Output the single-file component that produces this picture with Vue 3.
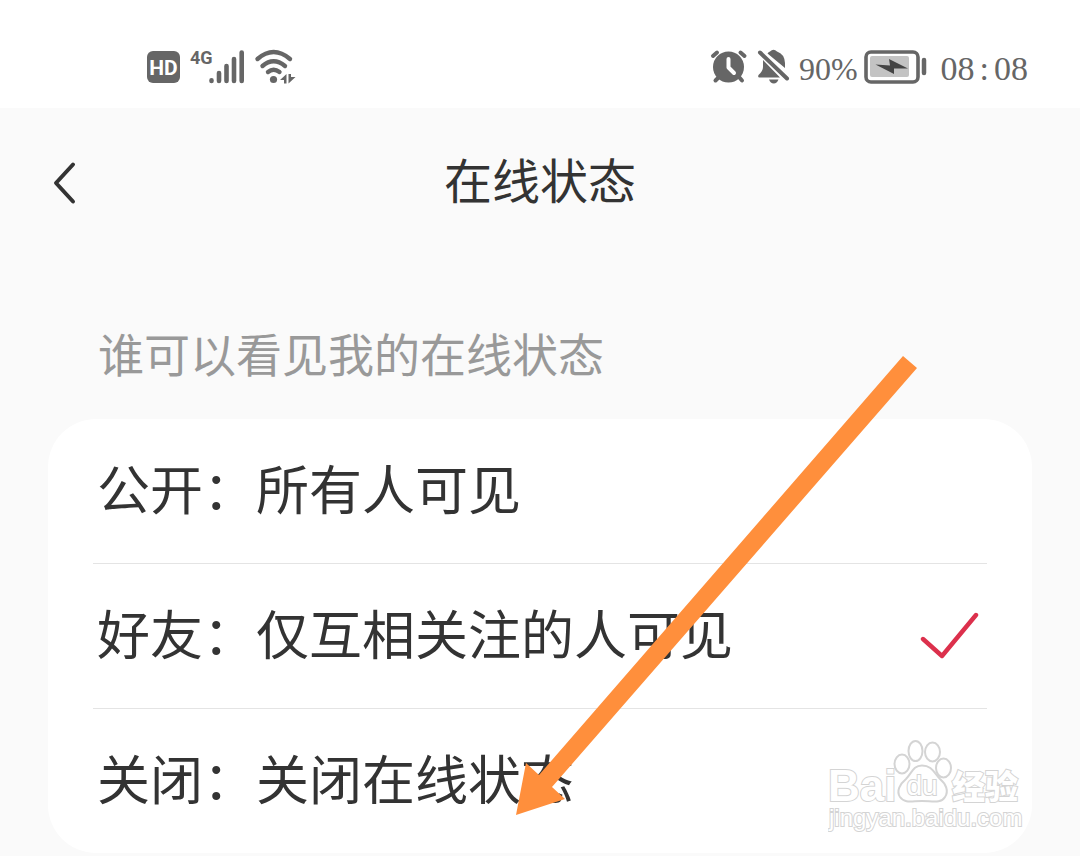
<script setup>
import { ref } from 'vue'

const selected = ref('friends')
const options = [
  { id: 'public', text: '公开：所有人可见' },
  { id: 'friends', text: '好友：仅互相关注的人可见' },
  { id: 'off', text: '关闭：关闭在线状态' },
]
</script>

<template>
  <div class="screen">
    <div class="status">
      <div class="group">
        <svg class="hd" width="33" height="32" viewBox="0 0 33 32" aria-label="HD">
          <rect width="33" height="32" rx="6" fill="#666" />
          <text x="16.5" y="24" text-anchor="middle">HD</text>
        </svg>
        <svg class="signal" width="54" height="34" viewBox="0 0 54 34">
          <text x="-1" y="14">4G</text>
          <g stroke="#666" stroke-width="4.6" stroke-linecap="round">
            <path d="M20.5 30.4v.6M28 23v8M35.500 16v15M43 9v22M50.700 2.500v28.500" />
          </g>
        </svg>
        <svg width="41" height="34" viewBox="0 0 41 34">
          <g fill="none" stroke="#666" stroke-width="4.4" stroke-linecap="round">
            <path d="M2.5 9Q18.5-5 35 9" />
            <path d="M7.5 16Q18.5 6.5 30 16" />
            <path d="M13 22Q18.5 17.500 24.5 22" />
          </g>
          <circle cx="18.5" cy="29.500" r="3.6" fill="#666" />
          <path d="M31.5 24v9.500h-2.500v-3.500h-4zM33.5 24h2.500v3h4.500l-7 6.500z" fill="#666" />
        </svg>
      </div>
      <div class="group">
        <svg class="alarm" width="36" height="34" viewBox="0 0 36 34">
          <g stroke="#666" stroke-width="4" stroke-linecap="round">
            <path d="M2 6L6 2.500M29.5 2.500L33.5 6M8 27L4.500 30.500M28 27L31 30.500" />
          </g>
          <circle cx="17.500" cy="17" r="15.500" fill="#666" />
          <path d="M17.500 9v8.500l5.500 5.500" fill="none" stroke="#fff" stroke-width="4" stroke-linecap="round" stroke-linejoin="round" />
        </svg>
        <svg class="bell" width="32" height="34" viewBox="0 0 32 34">
          <path d="M12 1.500Q15.500-2 19 1.500Q26.500 4 27 13v5L9.500 3.500Q10.500 2 12 1.500zM5 10L22 27.500H1.500Q-.5 27.500 .5 25Q5 21 5 17z" fill="#666" />
          <path d="M2 2.500L29 28.500" stroke="#666" stroke-width="4" stroke-linecap="round" />
          <path d="M11 29.500h9.500Q19 33.500 15.800 33.500Q12.500 33.500 11 29.500z" fill="#666" />
        </svg>
        <span class="percent">90%</span>
        <svg class="battery" width="64" height="34" viewBox="0 0 64 34">
          <rect x="2" y="2" width="52" height="30" rx="5" fill="#fff" stroke="#666" stroke-width="3.6" />
          <rect x="6" y="6" width="39" height="21" rx="2" fill="#c3c3c3" />
          <path d="M11.500 14.500L26 15.500L25 9L44 18.500L30 18.500L30 24z" fill="#444" />
          <path d="M60 10v13" stroke="#666" stroke-width="4.500" stroke-linecap="round" />
        </svg>
        <time class="clock"><span>08</span><span>:</span><span>08</span></time>
      </div>
    </div>

    <header class="bar">
      <button class="back" type="button" aria-label="返回">
        <svg width="24" height="44" viewBox="0 0 24 44">
          <path d="M21 3.500L4 22L21 40.500" fill="none" stroke="#333" stroke-width="4" stroke-linecap="round" stroke-linejoin="round" />
        </svg>
      </button>
      <h1>在线状态</h1>
    </header>

    <main>
      <h2 id="who">谁可以看见我的在线状态</h2>
      <div class="card" role="radiogroup" aria-labelledby="who">
        <label v-for="o in options" :key="o.id" class="row">
          <input v-model="selected" type="radio" name="visibility" :value="o.id" />
          <span>{{ o.text }}</span>
          <svg v-if="selected === o.id" width="60" height="48" viewBox="0 0 60 48">
            <path d="M4 27L23 44L57 3" fill="none" stroke="#dc304c" stroke-width="4.400" stroke-linecap="round" stroke-linejoin="round" />
          </svg>
        </label>

        <svg class="mark" width="200" height="100" viewBox="0 0 200 100">
          <g fill="#fff" stroke="#d4d4d4" stroke-width="2">
            <text class="logo" x="0" y="65">Bai</text>
            <ellipse cx="74" cy="28" rx="7.500" ry="9.500" />
            <ellipse cx="87.500" cy="15" rx="7" ry="10" />
            <ellipse cx="104.500" cy="16" rx="7.500" ry="9.500" />
            <ellipse cx="115.500" cy="32" rx="7.500" ry="9.500" />
            <path d="M94 29.500C104 29.500 106 37 112 43C118 48 121 55 117 61C113 68 104 65 94 65C84 65 77 68 72 61C68 55 72 48 78 43C84 37 85 29.500 94 29.500z" />
            <text class="du" x="94" y="59" text-anchor="middle">du</text>
            <text class="cn" x="124" y="63">经验</text>
            <text class="site" x="1" y="90">jingyan.baidu.com</text>
          </g>
        </svg>
      </div>
    </main>

    <svg class="arrow" width="402" height="460" viewBox="0 0 402 460">
      <path d="M387 1L401 13L36 432L49 444L0 460L10 408L23 420z" fill="#ff8f3c" />
    </svg>
  </div>
</template>

<style>
body {
  background: #fafafa;
}
</style>

<style scoped>
.screen {
  position: relative;
  min-height: 100vh;
  box-sizing: border-box;
  overflow: hidden;
  color: #333;
  background: #fafafa;
  font-family: "Noto Sans CJK SC", sans-serif;
}
.status {
  display: flex;
  justify-content: space-between;
  align-items: center;
  height: 108px;
  box-sizing: border-box;
  padding: 26px 52px 0 147px;
  background: #fff;
  color: #666;
}
.group {
  display: flex;
  align-items: center;
}
.group svg {
  flex: none;
  overflow: visible;
}
.hd text {
  font: bold 21px Roboto, sans-serif;
  fill: #fff;
}
.signal {
  margin: 0 10px 0 11px;
}
.signal text {
  font: bold 18px Roboto, sans-serif;
  fill: #666;
}
.alarm {
  margin-right: 11px;
}
.bell {
  margin-right: 9px;
}
.percent {
  font: 32px/40px "Liberation Serif", serif;
  padding-top: 4px;
}
.battery {
  margin: 0 13px 0 6px;
}
.clock {
  display: flex;
  gap: 5px;
  font: 34px/40px "Liberation Serif", serif;
  padding-top: 4px;
}
.bar {
  display: grid;
  grid-template-columns: 48px 1fr 48px;
  align-items: center;
  height: 150px;
  padding: 0 40px;
}
.back {
  display: flex;
  justify-content: center;
  padding: 0;
  border: 0;
  background: none;
}
h1 {
  margin: 0;
  padding-bottom: 10px;
  text-align: center;
  font-size: 48px;
  line-height: 72px;
  font-weight: 400;
}
main {
  padding: 58px 48px 3px;
}
h2 {
  margin: 0 0 31px 50px;
  font-size: 46px;
  line-height: 72px;
  font-weight: 400;
  color: #999;
}
.card {
  position: relative;
  padding: 0 45px;
  border-radius: 48px;
  background: #fff;
}
.row {
  display: flex;
  justify-content: space-between;
  align-items: center;
  height: 144px;
  padding: 0 8px 0 4px;
  font-size: 53px;
}
.row span {
  padding-bottom: 8px;
}
.row + .row {
  border-top: 1px solid #e4e4e4;
}
.row input {
  position: absolute;
  opacity: 0;
}
.mark {
  position: absolute;
  right: 4px;
  bottom: 17px;
}
.mark text {
  paint-order: stroke;
}
.logo {
  font: bold 44px "Liberation Sans", sans-serif;
}
.du {
  font: 28px "Liberation Sans", sans-serif;
}
.cn {
  font: 900 33px "Noto Sans CJK SC", sans-serif;
}
.site {
  font: 24px "Liberation Sans", sans-serif;
}
.arrow {
  position: absolute;
  left: 516px;
  top: 355px;
  pointer-events: none;
}
</style>
